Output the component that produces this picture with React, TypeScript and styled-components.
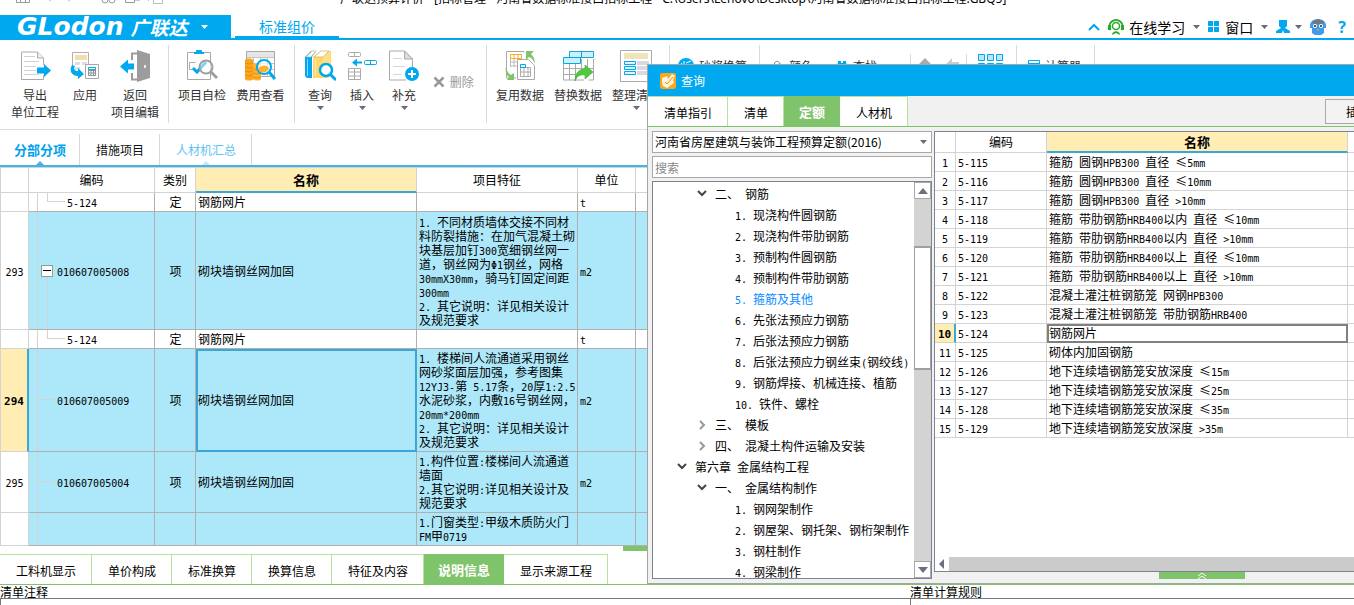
import React from "react";
import styled, { createGlobalStyle, css } from "styled-components";

const BLUE = "#00a8f0";
const GREEN = "#7fc36a";
const PALE_GREEN = "#b5e3a0";
const GRID = "#d3d3d3";
const ROW_LINE = "#b0b0b0";
const YELLOW = "#ffedb4";
const SELECT_BLUE = "#3ba7d6";
const ROW_BLUE = "#ade8fa";

const GlobalStyle = createGlobalStyle`
  * { box-sizing: border-box; }
  body {
    margin: 0;
    overflow: hidden;
    background: #fff;
    color: #000;
    font: 12px/14px "Noto Sans CJK SC", sans-serif;
  }
  button, input, select { font: inherit; color: inherit; }
  svg { display: block; flex: none; }
`;

/* ---------- text ---------- */

const Latin = styled.span<{ $bold?: boolean }>`
  font-family: "DejaVu Sans Mono", monospace;
  font-size: ${(p) => (p.$bold ? 11 : 10)}px;
  line-height: 0;
`;

const Line = styled.span`
  display: block;
  height: 14px;
  white-space: pre;
`;

function Mixed({ children, bold }: { children: string; bold?: boolean }) {
  return (
    <>
      {children.split(/([\x20-\x7eΦ]+)/).map((run, i) =>
        i % 2 ? <Latin key={i} $bold={bold}>{run}</Latin> : run
      )}
    </>
  );
}

/* ---------- frame ---------- */

const Page = styled.div`
  position: relative;
  display: flex;
  flex-direction: column;
  height: 100vh;
  overflow: hidden;
`;

const TitleBar = styled.header`
  display: flex;
  flex: none;
  align-items: flex-start;
  height: 15px;
  overflow: hidden;
  font-family: "Noto Sans", "Noto Sans CJK SC", sans-serif;
  white-space: pre;
`;

const QuickTools = styled.div`
  display: flex;
  gap: 12px;
  width: 340px;
  padding-left: 16px;
`;

const WindowTitle = styled.h1`
  margin: -8px 0 0;
  font-size: 12px;
  line-height: 14px;
  font-weight: 400;
`;

const MenuBar = styled.nav`
  display: flex;
  flex: none;
  align-items: stretch;
  height: 25px;
  border-bottom: 2px solid ${BLUE};
`;

const Brand = styled.button`
  display: flex;
  align-items: center;
  gap: 7px;
  width: 231px;
  padding: 0 0 0 17px;
  border: 0;
  background: ${BLUE};
  color: #fff;
  white-space: nowrap;
`;

const BrandLatin = styled.span`
  font: italic bold 25px/23px "DejaVu Sans", sans-serif;
`;

const BrandHan = styled.span`
  margin-right: 6px;
  font-size: 19px;
  line-height: 23px;
  font-style: italic;
  font-weight: 700;
`;

const MenuTab = styled.a`
  width: 104px;
  margin-left: 4px;
  border-bottom: 2px solid ${BLUE};
  color: ${BLUE};
  font-size: 14px;
  line-height: 22px;
  text-align: center;
  text-decoration: none;
`;

const MenuTools = styled.div`
  display: flex;
  align-items: center;
  gap: 8px;
  margin-left: auto;
  padding-right: 8px;
`;

const MenuButton = styled.button`
  display: flex;
  align-items: center;
  gap: 5px;
  padding: 0;
  border: 0;
  background: none;
  font-size: 14px;
  line-height: 20px;
  white-space: nowrap;
`;

const HelpButton = styled(MenuButton)`
  margin-left: 4px;
  color: ${BLUE};
  font: 700 16px/20px "Open Sans", sans-serif;
`;

/* ---------- ribbon ---------- */

const Ribbon = styled.div`
  display: flex;
  flex: none;
  height: 90px;
  padding: 5px 0 6px;
  border-bottom: 1px solid #dcdcdc;
`;

const RibbonGroup = styled.div<{ $left?: number; $right?: number; $short?: boolean }>`
  display: flex;
  align-items: flex-start;
  margin-top: ${(p) => (p.$short ? 9 : 0)}px;
  padding: ${(p) => (p.$short ? 0 : 5)}px ${(p) => p.$right ?? 4}px 0 ${(p) => p.$left ?? 4}px;
  border-right: 1px solid #dcdcdc;
`;

const RibbonButton = styled.button<{ $width: number }>`
  display: flex;
  flex-direction: column;
  align-items: center;
  width: ${(p) => p.$width}px;
  padding: 0;
  border: 0;
  background: none;
  color: #333;
  line-height: 17px;
  white-space: nowrap;
  > svg:first-child { margin-bottom: 4px; }
  > svg:last-child:not(:first-child) { margin-top: 3px; }
`;

const InlineButton = styled.button<{ $top?: number; $color?: string; $width?: number }>`
  display: flex;
  align-items: center;
  gap: 5px;
  width: ${(p) => (p.$width ? p.$width + "px" : "auto")};
  margin-top: ${(p) => p.$top ?? 8}px;
  padding: 0;
  border: 0;
  background: none;
  color: ${(p) => p.$color ?? "#333"};
  line-height: 16px;
  white-space: nowrap;
`;

/* ---------- tabs ---------- */

const SectionTabs = styled.div`
  display: flex;
  flex: none;
  height: 37px;
  padding-top: 4px;
  border-bottom: 2px solid #41b5e6;
`;

const SectionTab = styled.button<{ $tone?: "active" | "link" }>`
  position: relative;
  padding: 0 15px 0 16px;
  border: 0;
  border-right: 1px solid #d8d8d8;
  background: none;
  line-height: 31px;
  color: #111;
  ${(p) =>
    p.$tone === "active" &&
    css`
      padding: 0 13px 0 14px;
      color: #00a2ef;
      font-size: 13px;
      font-weight: 700;
    `}
  ${(p) => p.$tone === "link" && "color: #5cc4ef;"}
  &::after {
    content: ${(p) => (p.$tone ? '""' : "none")};
    position: absolute;
    left: 50%;
    bottom: 0;
    margin-left: -4px;
    border: 4px solid transparent;
    border-top: 0;
    border-bottom-color: ${(p) => (p.$tone === "active" ? "#41b5e6" : "#c4e9f6")};
  }
`;

const GreenTabs = styled.div`
  display: flex;
  flex: none;
  height: 31px;
  border-bottom: 1px solid ${GREEN};
`;

const GreenTab = styled.button<{ $active?: boolean }>`
  padding: 3px 15px 0 16px;
  border: 0;
  border-top: 1px solid ${PALE_GREEN};
  border-right: 1px solid ${PALE_GREEN};
  background: #fff;
  white-space: nowrap;
  ${(p) =>
    p.$active &&
    css`
      min-width: 56px;
      padding: 1px 13px 0 14px;
      border-color: ${GREEN};
      background: ${GREEN};
      color: #fff;
      font-size: 13px;
      font-weight: 700;
    `}
`;

/* ---------- tables ---------- */

const Sheet = styled.table`
  width: 100%;
  border-spacing: 0;
  table-layout: fixed;
`;

const Head = styled.th<{ $current?: boolean; $height: number }>`
  height: ${(p) => p.$height}px;
  padding: 0;
  border-right: 1px solid ${GRID};
  border-bottom: 1px solid ${GRID};
  font-weight: 400;
  ${(p) =>
    p.$current &&
    css`
      border-bottom: 2px solid ${SELECT_BLUE};
      background: ${YELLOW};
      font-size: 13px;
      font-weight: 700;
    `}
`;

const Cell = styled.td<{ $line?: string; $center?: boolean; $picked?: string }>`
  position: relative;
  padding: 0 1px 0 2px;
  border-right: 1px solid ${(p) => p.$line ?? GRID};
  border-bottom: 1px solid ${(p) => p.$line ?? GRID};
  overflow: hidden;
  white-space: pre;
  text-align: ${(p) => (p.$center ? "center" : "left")};
  ${(p) =>
    p.$picked &&
    css`
      outline: 2px solid ${p.$picked};
      outline-offset: -2px;
    `}
`;

const RowNumber = styled.th<{ $current?: boolean }>`
  padding: 0;
  border-right: 1px solid ${GRID};
  border-bottom: 1px solid ${GRID};
  background: #fff;
  font-weight: 400;
  text-align: center;
  ${(p) =>
    p.$current &&
    css`
      border-right: 2px solid ${SELECT_BLUE};
      background: ${YELLOW};
      font-weight: 700;
    `}
`;

const BillRow = styled.tr<{ $height: number; $filled?: boolean }>`
  height: ${(p) => p.$height}px;
  background: ${(p) => (p.$filled ? ROW_BLUE : "#fff")};
`;

const QuotaRow = styled.tr`
  height: 19px;
`;

const BillArea = styled.main`
  flex: none;
  border-top: 1px solid ${GRID};
  border-left: 1px solid ${GRID};
`;

const CodeCell = styled(Cell)<{ $indent: number }>`
  padding-left: ${(p) => p.$indent}px;
  &::before {
    content: "";
    position: absolute;
    top: 0;
    bottom: 0;
    left: 8px;
    border-left: 1px solid ${GRID};
  }
`;

const Branch = styled.span<{ $kind: "leaf" | "child" }>`
  position: absolute;
  top: 0;
  height: 50%;
  left: ${(p) => (p.$kind === "child" ? 18 : 9)}px;
  width: ${(p) => (p.$kind === "child" ? 18 : 17)}px;
  border-bottom: 1px solid ${GRID};
  border-left: ${(p) => (p.$kind === "child" ? 1 : 0)}px solid ${GRID};
`;

const Stem = styled.span`
  position: absolute;
  top: 50%;
  bottom: 0;
  left: 18px;
  border-left: 1px solid ${GRID};
`;

const Fold = styled.button`
  position: absolute;
  top: 50%;
  left: 12px;
  display: flex;
  align-items: center;
  justify-content: center;
  width: 12px;
  height: 12px;
  margin-top: -6px;
  padding: 0;
  border: 1px solid #999;
  background: #fff;
`;

/* ---------- lower part ---------- */

const Splitter = styled.div`
  flex: none;
  height: 8px;
  padding-left: 46%;
`;

const Handle = styled.button<{ $height: number }>`
  display: flex;
  align-items: flex-end;
  justify-content: center;
  width: 86px;
  height: ${(p) => p.$height}px;
  padding: 0;
  border: 0;
  background: ${GREEN};
`;

const Notes = styled.div`
  display: grid;
  flex: 1;
  grid-template-columns: 910fr 444fr;
`;

const NotePane = styled.section`
  display: flex;
  flex-direction: column;
  line-height: 13px;
`;

const NoteBox = styled.div`
  flex: 1;
  border-top: 1px solid #777;
  border-left: 1px solid #777;
`;

/* ---------- query window ---------- */

const Dialog = styled.section`
  position: absolute;
  top: 64px;
  left: 647px;
  right: -116px;
  display: flex;
  flex-direction: column;
  border: 1px solid #a5a5a5;
  background: #f1f1f1;
`;

const DialogTitle = styled.h2`
  display: flex;
  align-items: center;
  gap: 5px;
  height: 31px;
  margin: 0;
  padding-left: 12px;
  background: ${BLUE};
  color: #fff;
  font-size: 12px;
  font-weight: 400;
`;

const DialogAction = styled.button`
  width: 66px;
  height: 25px;
  margin: 3px 78px 0 auto;
  border: 1px solid #a8a8a8;
  background: #f3f3f3;
`;

const DialogBody = styled.div`
  display: flex;
  gap: 2px;
  padding: 4px 0 4px 4px;
`;

const Finder = styled.div`
  display: flex;
  flex: none;
  flex-direction: column;
  gap: 3px;
  width: 280px;
`;

const SelectWrap = styled.label`
  position: relative;
  display: flex;
  > svg {
    position: absolute;
    top: 9px;
    right: 5px;
    pointer-events: none;
  }
`;

const LibrarySelect = styled.select`
  appearance: none;
  width: 100%;
  height: 22px;
  padding: 0 0 0 2px;
  border: 1px solid #a8a8a8;
  border-radius: 0;
  background: #fff;
`;

const SearchBox = styled.input`
  width: 100%;
  height: 22px;
  padding: 0 2px;
  border: 1px solid #a8a8a8;
  background: #fff;
  &::placeholder { color: #888; }
`;

const TreeBox = styled.div`
  display: flex;
  height: 398px;
  border: 1px solid #7f838f;
  background: #fff;
`;

const Tree = styled.ul`
  flex: 1;
  margin: 0;
  padding: 1px 0 0;
  overflow: hidden;
  list-style: none;
`;

const TreeItem = styled.li<{ $indent: number; $active?: boolean }>`
  display: flex;
  align-items: center;
  gap: 8px;
  height: 21px;
  padding-left: ${(p) => p.$indent}px;
  color: ${(p) => (p.$active ? "#0a8cff" : "#000")};
  white-space: pre;
`;

const ScrollColumn = styled.div`
  display: flex;
  flex-direction: column;
  width: 17px;
  background: #d3d3d3;
`;

const ScrollButton = styled.button<{ $flat?: boolean }>`
  display: flex;
  flex: none;
  align-items: center;
  justify-content: center;
  width: ${(p) => (p.$flat ? 14 : 17)}px;
  height: ${(p) => (p.$flat ? 14 : 17)}px;
  padding: 0;
  border: ${(p) => (p.$flat ? 0 : 1)}px solid #a8a8a8;
  background: #fff;
`;

const ScrollThumb = styled.div`
  height: 124px;
  margin: 47px 0 auto;
  border: 1px solid #a0a0a0;
  border-width: 2px 1px;
  background: #fff;
`;

const Results = styled.div`
  display: flex;
  flex: 1;
  flex-direction: column;
  align-items: center;
`;

const ResultPanel = styled.div`
  display: flex;
  flex: 1;
  flex-direction: column;
  width: 100%;
  border: 1px solid #7f838f;
  background: #fff;
`;

const ScrollRow = styled.div`
  display: flex;
  margin-top: auto;
  background: #cbcbcb;
`;

/* ---------- icons ---------- */

const Caret = ({ color = "#6b6b78" }: { color?: string }) => (
  <svg width="7" height="4" viewBox="0 0 7 4"><path d="M0 0h7L3.5 4z" fill={color} /></svg>
);

const Arrow = ({ d }: { d: string }) => (
  <svg width="10" height="10" viewBox="0 0 10 10"><path d={d} fill="#6b6f80" /></svg>
);

const Chevron = ({ open }: { open?: boolean }) => (
  <svg width="10" height="10" viewBox="0 0 10 10" fill="none" stroke={open ? "#444" : "#999"} strokeWidth="2">
    <path d={open ? "M1 2l4 4 4-4" : "M3 1l4 4-4 4"} />
  </svg>
);

const Icon = ({ children, size = 32 }: { children: React.ReactNode; size?: number }) => (
  <svg width={size} height={size} viewBox={`0 0 ${size} ${size}`} fill="none">{children}</svg>
);

const ExportIcon = () => (
  <Icon>
    <path d="M24.500 15V8l-6-6H2.500v27.500h22V25" stroke="#aaa" />
    <path d="M18.500 2v6h6" stroke="#aaa" fill="#eee" />
    <path d="M5 6.500h11M5 11.500h15M5 16.500h12M5 20.500h12M5 24.500h15" stroke="#d0d0d8" />
    <path d="M18 17.500h7V14l7 6.500-7 6.500v-3.500h-7z" fill={BLUE} />
  </Icon>
);

const ApplyIcon = () => (
  <Icon>
    <path d="M3.500 20V2.500h16V14" stroke="#b0b0b0" />
    <path d="M6 5h12v5H6z" fill="#f1ddb0" />
    <path d="M6 12h5v3H6zM13 12h5v3h-5zM6 17h5v3H6z" fill="#dedee4" />
    <path d="M16.500 14.500h13v14h-13z" fill="#fff" stroke="#a8a8a8" />
    <path d="M19.500 17.500h7v3h-7zM19.500 20.500h7v5h-7zM22 20v6M24.500 20v6M19 23h8" stroke="#89919a" />
    <path d="M19.500 17.500h7v2h-7z" stroke="#17b0d0" />
    <path d="M3 15c-3 5-1 11 6 11v3l6-5-6-6v3c-3 0-5-2-3-5z" fill={BLUE} />
  </Icon>
);

const ReturnIcon = () => (
  <Icon>
    <path d="M18 3.500h-5V10M13 23v6.500h5" stroke="#9c9c9c" strokeWidth="2" />
    <path d="M18 0l13 4v24l-13 4z" fill="#9c9c9c" />
    <path d="M25 15h2v3h-2z" fill="#eee" />
    <path d="M1 16.500l8-7v4h6v6H9v4z" fill={BLUE} />
  </Icon>
);

const CheckIcon = () => (
  <Icon>
    <path d="M1.500 2.500h23v27h-23z" stroke="#a8a8a8" />
    <path d="M8 2h2a3 3 0 016 0h2v2H8z" fill={BLUE} />
    <path d="M9.500 12.500h-6v7H10" stroke="#aaa" />
    <path d="M7 18l4 4 9-10" stroke={BLUE} strokeWidth="3" />
    <circle cx="20" cy="17" r="6.500" stroke="#9d9d9d" strokeWidth="2" fill="#fff" fillOpacity=".5" />
    <path d="M25 22l6 6" stroke="#9d9d9d" strokeWidth="3" />
  </Icon>
);

const FeeIcon = () => (
  <Icon>
    <path d="M1.500 1.500h28v25h-28z" stroke="#a8a8a8" />
    <path d="M2 2h27v5H2z" fill="#e6e6e6" />
    <path d="M2 7.500h27M2 13.500h27M2 19.500h27M8.500 8v18M15.500 8v18M22.500 8v18" stroke="#c4c4c4" />
    <path d="M0 10c0-2 8-2 8 0v19c0 2-8 2-8 0z" fill="#fca51c" />
    <path d="M8 15c0-2 8-2 8 0v14c0 2-8 2-8 0z" fill="#fcb12f" />
    <path d="M0 13q4 2 8 0M0 17q4 2 8 0M0 21q4 2 8 0M0 25q4 2 8 0M8 19q4 2 8 0M8 23q4 2 8 0M8 27q4 2 8 0" stroke="#d98208" strokeWidth=".7" />
    <circle cx="19" cy="17" r="7" fill="#fff" fillOpacity=".7" stroke={BLUE} strokeWidth="2" />
    <path d="M13 19c3-4 8-5 11-1-2 6-9 6-11 1z" fill="#fcb12f" />
    <path d="M24 22l6 7" stroke={BLUE} strokeWidth="3" />
  </Icon>
);

const QueryIcon = () => (
  <Icon>
    <path d="M1 7l6-6h5L8 7v21H3l-2-2z" fill={BLUE} />
    <path d="M2 7l6-6h4L7 7z" fill="#fff" stroke="#c9b27a" strokeWidth=".7" />
    <path d="M9 7l8-6h10v25l-4 2H9z" fill="#ffd76a" />
    <path d="M10 7l7-6h8l-6 6z" fill="#fff" stroke="#c9a95a" strokeWidth=".7" />
    <path d="M19 7l7-6v24l-7 3z" fill="#ffdf86" />
    <path d="M3.500 9v17M11.500 9v17" stroke="#fff" strokeOpacity=".5" />
    <circle cx="22" cy="20" r="6" fill="#fff" stroke={BLUE} strokeWidth="2.500" />
    <path d="M26 24l6 6" stroke={BLUE} strokeWidth="3" />
  </Icon>
);

const InsertIcon = () => (
  <Icon>
    <rect x="2.500" y="2.500" width="12" height="4" rx="1" stroke="#aaa" />
    <path d="M8.500 3v4" stroke="#aaa" />
    <rect x="18.500" y="10.500" width="12" height="4" rx="1" stroke={BLUE} />
    <path d="M24.500 11v4" stroke={BLUE} />
    <path d="M6 12.500l5-4v3h5v2h-5v3z" fill={BLUE} />
    <path d="M2.500 18.500h12v11h-12zM2.500 22h12M2.500 26h12M8.500 18v12" stroke="#aaa" />
  </Icon>
);

const SupplementIcon = () => (
  <Icon>
    <path d="M24.500 18V9l-8-8H1.500v29H18" stroke="#aaa" />
    <path d="M16.500 1v8h8z" stroke="#aaa" fill="#ddd" />
    <path d="M5 8.500h9M5 16.500h12M5 24.500h9" stroke="#d5d5dc" />
    <circle cx="24" cy="24" r="7" fill={BLUE} />
    <path d="M20 24h8M24 20v8" stroke="#fff" strokeWidth="2" />
  </Icon>
);

const DeleteIcon = () => (
  <Icon size={12}><path d="M1.500 1.500l9 9M10.500 1.500l-9 9" stroke="#999" strokeWidth="2.500" /></Icon>
);

const ReuseIcon = () => (
  <Icon>
    <path d="M20 2.500V1.500H2.500V28H12" stroke="#aaa" />
    <path d="M6.500 4.500h11v4h-11zM10 4v5M14 4v5" stroke="#f7ad22" />
    <path d="M6 12h10M6 16h7M6.500 9v8M10 9v8" stroke="#bbb" />
    <path d="M13.500 9.500h11l6 6v14h-17z" fill="#fff" stroke="#aaa" />
    <path d="M16.500 17.500h10v9h-10zM16 22h11M20 17v10M24 17v10" stroke="#aaa" />
    <path d="M16.500 14.500h5v3h-5z" stroke={BLUE} />
    <path d="M22 1h8l-3 3c3 3 4 6 4 10-1-3-3-6-6-7l-3 3z" fill={GREEN} />
    <path d="M2 17c1 4 2 6 5 8l3-2v7H3l2-3c-3-2-4-6-3-10z" fill={GREEN} />
  </Icon>
);

const ReplaceIcon = () => (
  <Icon>
    <path d="M1.500 13.500V30H22M1 18.500h30M1 24.500h16M7.500 14v16M13.500 14v16M19.500 9v12M25.500 9v10M31.500 9v21h-5" stroke="#aaa" />
    <path d="M7.500 1.500h24v6h-24zM19.500 2v6" fill="#c8f1fb" stroke="#24a4c9" />
    <path d="M1.500 7.500h17v6h-17z" fill="#c8f1fb" stroke={BLUE} />
    <path d="M13 31c0-8 4-12 10-12v-4l8 7-8 7v-4c-5-1-8 1-10 6z" fill="#50c93d" stroke="#3aa62d" strokeWidth=".6" />
  </Icon>
);

const ArrangeIcon = () => (
  <Icon>
    <path d="M.500.500h31v31H.500z" stroke="#aaa" />
    <path d="M4 3h24v6H4z" fill="#f1e3b8" />
    <path d="M17 11h12v4H17zM17 16h12v4H17zM17 21h12v4H17z" fill="#d9d9e2" />
    <path d="M4.500 11.500h11v3h-11zM4.500 16.500h11v3h-11zM4.500 21.500h11v3h-11z" stroke={BLUE} fill="#dff4fc" />
  </Icon>
);

/* ---------- data ---------- */

type Bill = {
  no?: string;
  code?: string;
  kind?: string;
  name?: string;
  features?: string[];
  unit?: string;
  height: number;
  node: "child" | "parent" | "leaf" | "none";
  current?: boolean;
};

const bills: Bill[] = [
  { code: "5-124", kind: "定", name: "钢筋网片", unit: "t", height: 19, node: "child" },
  {
    no: "293", code: "010607005008", kind: "项", name: "砌块墙钢丝网加固", unit: "m2", height: 118, node: "parent",
    features: ["1. 不同材质墙体交接不同材", "料防裂措施：在加气混凝土砌", "块基层加钉300宽细钢丝网一", "道，钢丝网为Φ1钢丝，网格", "30mmX30mm，骑马钉固定间距", "300mm", "2. 其它说明：详见相关设计", "及规范要求"],
  },
  { code: "5-124", kind: "定", name: "钢筋网片", unit: "t", height: 19, node: "child" },
  {
    no: "294", code: "010607005009", kind: "项", name: "砌块墙钢丝网加固", unit: "m2", height: 103, node: "leaf", current: true,
    features: ["1. 楼梯间人流通道采用钢丝", "网砂浆面层加强，参考图集", "12YJ3-第 5.17条，20厚1:2.5", "水泥砂浆，内敷16号钢丝网，", "20mm*200mm", "2. 其它说明：详见相关设计", "及规范要求"],
  },
  {
    no: "295", code: "010607005004", kind: "项", name: "砌块墙钢丝网加固", unit: "m2", height: 61, node: "leaf",
    features: ["1.构件位置:楼梯间人流通道", "墙面", "2.其它说明:详见相关设计及", "规范要求"],
  },
  { height: 33, node: "none", features: ["1.门窗类型:甲级木质防火门", "FM甲0719"] },
];

const tree: { text: string; level: 0 | 1 | 2; open?: boolean; active?: boolean }[] = [
  { text: "二、 钢筋", level: 1, open: true },
  { text: "1. 现浇构件圆钢筋", level: 2 },
  { text: "2. 现浇构件带肋钢筋", level: 2 },
  { text: "3. 预制构件圆钢筋", level: 2 },
  { text: "4. 预制构件带肋钢筋", level: 2 },
  { text: "5. 箍筋及其他", level: 2, active: true },
  { text: "6. 先张法预应力钢筋", level: 2 },
  { text: "7. 后张法预应力钢筋", level: 2 },
  { text: "8. 后张法预应力钢丝束(钢绞线)", level: 2 },
  { text: "9. 钢筋焊接、机械连接、植筋", level: 2 },
  { text: "10. 铁件、螺栓", level: 2 },
  { text: "三、 模板", level: 1 },
  { text: "四、 混凝土构件运输及安装", level: 1 },
  { text: "第六章 金属结构工程", level: 0, open: true },
  { text: "一、 金属结构制作", level: 1, open: true },
  { text: "1. 钢网架制作", level: 2 },
  { text: "2. 钢屋架、钢托架、钢桁架制作", level: 2 },
  { text: "3. 钢柱制作", level: 2 },
  { text: "4. 钢梁制作", level: 2 },
];

const treeIndent = { 0: 24, 1: 44, 2: 82 };

const quotas = [
  "箍筋 圆钢HPB300 直径 ≤5mm",
  "箍筋 圆钢HPB300 直径 ≤10mm",
  "箍筋 圆钢HPB300 直径 >10mm",
  "箍筋 带肋钢筋HRB400以内 直径 ≤10mm",
  "箍筋 带肋钢筋HRB400以内 直径 >10mm",
  "箍筋 带肋钢筋HRB400以上 直径 ≤10mm",
  "箍筋 带肋钢筋HRB400以上 直径 >10mm",
  "混凝土灌注桩钢筋笼 网钢HPB300",
  "混凝土灌注桩钢筋笼 带肋钢筋HRB400",
  "钢筋网片",
  "砌体内加固钢筋",
  "地下连续墙钢筋笼安放深度 ≤15m",
  "地下连续墙钢筋笼安放深度 ≤25m",
  "地下连续墙钢筋笼安放深度 ≤35m",
  "地下连续墙钢筋笼安放深度 >35m",
];

/* ---------- parts ---------- */

function TopBars() {
  return (
    <>
      <TitleBar>
        <QuickTools>
          <svg width="150" height="5" viewBox="0 0 150 5" fill="none" stroke="#999">
            <path d="M.500 0v2.500h13V0M4.500 0v2M9.500 0v2" />
            <path d="M33 0l2 1M54 0l-2 1" stroke="#8fd4f4" />
            <circle cx="89" cy="0" r="3" /><circle cx="96" cy="0" r="3" />
            <path d="M109.500 0v2.500h9V0M119 0h5" />
            <path d="M132.500 0v1M137.500 0v3.500h9V0" stroke="#bbb" />
          </svg>
        </QuickTools>
        <WindowTitle>{"广联达预算计价 - [招标管理 - 河南省数据标准接口招标工程 - C:\\Users\\Lenovo\\Desktop\\河南省数据标准接口招标工程.GBQ5]"}</WindowTitle>
      </TitleBar>
      <MenuBar>
        <Brand>
          <BrandLatin>GLodon</BrandLatin>
          <BrandHan>广联达</BrandHan>
          <Caret color="#fff" />
        </Brand>
        <MenuTab href="#pricing">标准组价</MenuTab>
        <MenuTools>
          <MenuButton aria-label="收起">
            <svg width="12" height="8" viewBox="0 0 12 8" fill="none"><path d="M1 7l5-5 5 5" stroke={BLUE} strokeWidth="2" /></svg>
          </MenuButton>
          <MenuButton>
            <Icon size={16}>
              <path d="M2.500 11A6.500 6.500 0 1113.500 11" stroke="#2bab2b" strokeWidth="2" />
              <circle cx="8" cy="7" r="3.500" stroke="#2bab2b" strokeWidth="1.500" />
              <path d="M0 6h3v5H0zM13 6h3v5h-3zM4 16c0-5 8-5 8 0l-4-2z" fill="#2bab2b" />
            </Icon>
            在线学习
          </MenuButton>
          <Caret />
          <MenuButton>
            <Icon size={12}><path d="M0 0h5v5H0zM6 0h5v5H6zM0 6h5v5H0zM6 6h5v5H6z" fill={BLUE} /></Icon>
            窗口
          </MenuButton>
          <Caret />
          <MenuButton aria-label="账户">
            <Icon size={14}><path d="M3 0h8v6l-2 2 5 3v2H8l-1-3-1 3H0v-2l5-3-2-2z" fill={BLUE} /></Icon>
            <Caret />
          </MenuButton>
          <MenuButton aria-label="助手">
            <Icon size={16}>
              <path d="M0 6C1-2 15-2 16 6v3h-2v5l-3 2H5l-3-2V9H0z" fill="#3d9be9" />
              <path d="M2 3q6-5 12 0l-2 2H4z" fill="#777" />
              <circle cx="5" cy="7" r="2" fill="#fff" /><circle cx="11" cy="7" r="2" fill="#fff" />
              <circle cx="5" cy="7" r="1" fill="#222" /><circle cx="11" cy="7" r="1" fill="#222" />
              <path d="M7 10h2l-1 2z" fill="#f6b23c" />
            </Icon>
          </MenuButton>
          <HelpButton aria-label="帮助">?</HelpButton>
        </MenuTools>
      </MenuBar>
    </>
  );
}

function RibbonBar() {
  return (
    <Ribbon>
      <RibbonGroup $left={10} $right={8}>
        <RibbonButton $width={50}><ExportIcon />导出<span>单位工程</span></RibbonButton>
        <RibbonButton $width={50}><ApplyIcon />应用</RibbonButton>
        <RibbonButton $width={50}><ReturnIcon />返回<span>项目编辑</span></RibbonButton>
      </RibbonGroup>
      <RibbonGroup>
        <RibbonButton $width={58}><CheckIcon />项目自检</RibbonButton>
        <RibbonButton $width={59}><FeeIcon />费用查看</RibbonButton>
      </RibbonGroup>
      <RibbonGroup $right={7}>
        <RibbonButton $width={42}><QueryIcon />查询<Caret /></RibbonButton>
        <RibbonButton $width={42}><InsertIcon />插入<Caret /></RibbonButton>
        <RibbonButton $width={42}><SupplementIcon />补充<Caret /></RibbonButton>
        <InlineButton $top={24} $color="#999" $width={54}>&nbsp;<DeleteIcon />删除</InlineButton>
      </RibbonGroup>
      <RibbonGroup>
        <RibbonButton $width={58}><ReuseIcon />复用数据</RibbonButton>
        <RibbonButton $width={58}><ReplaceIcon />替换数据</RibbonButton>
        <RibbonButton $width={58}><ArrangeIcon />整理清单<Caret /></RibbonButton>
      </RibbonGroup>
      <RibbonGroup $left={8} $right={12}>
        <InlineButton>
          <Icon size={16}><circle cx="8" cy="8" r="8" fill={BLUE} /><path d="M3 5l2 2M6 3v5M8 5l5-2M9 7h4" stroke="#fff" /></Icon>
          砂浆换算
        </InlineButton>
      </RibbonGroup>
      <RibbonGroup $short $left={10} $right={33}>
        <InlineButton $top={4} $width={66}>
          <Icon size={14}><path d="M2 12l3-9 3-1 4 6-4 5z" fill="#fff" stroke="#999" /><path d="M9 3l4 4v4z" fill="#ee8a2d" /></Icon>
          颜色
        </InlineButton>
        <InlineButton $top={4}>
          <Icon size={12}><path d="M0 6l2-3V1h3v2h2V1h3v2l2 3v6H0z" fill={BLUE} /></Icon>
          查找
        </InlineButton>
      </RibbonGroup>
      <RibbonGroup $short $left={7} $right={7}>
        <InlineButton $top={4} $width={27} aria-label="上移"><Icon size={14}><path d="M7 0l7 7h-4v7H4V7H0z" fill="#aaa" /></Icon></InlineButton>
        <InlineButton $top={4} aria-label="左移"><Icon size={14}><path d="M0 7l7-7v4h7v6H7v4z" fill="#ccc" /></Icon></InlineButton>
      </RibbonGroup>
      <RibbonGroup $left={11} $right={11}>
        <InlineButton $top={4} aria-label="视图">
          <svg width="27" height="16" viewBox="0 0 27 16" fill="#bfe6f8" stroke={BLUE}>
            <path d="M.500.500h6v6h-6zM9.500.500h6v6h-6zM18.500.500h6v6h-6zM.500 9.500h6v6h-6zM9.500 9.500h6v6h-6zM18.500 9.500h6v6h-6z" />
          </svg>
        </InlineButton>
      </RibbonGroup>
      <RibbonGroup $left={11} $right={13}>
        <InlineButton>
          <Icon size={12}><path d="M.500.500h11v11H.500zM0 3.500h12" stroke={BLUE} /></Icon>
          计算器
        </InlineButton>
      </RibbonGroup>
    </Ribbon>
  );
}

function BillTable() {
  return (
    <BillArea>
      <Sheet>
        <colgroup>
          <col width="28" /><col width="126" /><col width="41" /><col width="221" />
          <col width="161" /><col width="58" /><col />
        </colgroup>
        <thead>
          <tr>
            <Head $height={25} />
            <Head $height={25}>编码</Head>
            <Head $height={25}>类别</Head>
            <Head $height={25} $current>名称</Head>
            <Head $height={25}>项目特征</Head>
            <Head $height={25}>单位</Head>
            <Head $height={25} />
          </tr>
        </thead>
        <tbody>
          {bills.map((b, i) => (
            <BillRow key={i} $height={b.height} $filled={b.node !== "child"}>
              <RowNumber $current={b.current}><Mixed bold={b.current}>{b.no ?? ""}</Mixed></RowNumber>
              <CodeCell $line={ROW_LINE} $indent={b.node === "child" ? 38 : 28}>
                {(b.node === "child" || b.node === "leaf") && <Branch $kind={b.node} />}
                {b.node === "parent" && (
                  <>
                    <Stem />
                    <Fold aria-label="折叠">
                      <svg width="8" height="2" viewBox="0 0 8 2"><path d="M0 0h8v1H0z" fill="#000" /></svg>
                    </Fold>
                  </>
                )}
                <Mixed>{b.code ?? ""}</Mixed>
              </CodeCell>
              <Cell $line={ROW_LINE} $center>{b.kind}</Cell>
              <Cell $line={ROW_LINE} $picked={b.current ? SELECT_BLUE : undefined}>{b.name}</Cell>
              <Cell $line={ROW_LINE}>
                {b.features?.map((f, n) => <Line key={n}><Mixed>{f}</Mixed></Line>)}
              </Cell>
              <Cell $line={ROW_LINE}><Mixed>{b.unit ?? ""}</Mixed></Cell>
              <Cell $line={ROW_LINE} />
            </BillRow>
          ))}
        </tbody>
      </Sheet>
    </BillArea>
  );
}

function QueryDialog() {
  return (
    <Dialog role="dialog" aria-label="查询">
      <DialogTitle>
        <Icon size={16}>
          <rect width="16" height="16" rx="2" fill="#ffa51e" />
          <path d="M2 5l5-2 1 3 4-5 3 2-2 4 1 3-7 5-4-2-1-3z" fill="#fff3d8" />
          <path d="M5 9l2 2 6-7" stroke="#ee9410" />
        </Icon>
        查询
      </DialogTitle>
      <GreenTabs>
        <GreenTab>清单指引</GreenTab>
        <GreenTab>清单</GreenTab>
        <GreenTab $active>定额</GreenTab>
        <GreenTab>人材机</GreenTab>
        <DialogAction>插入</DialogAction>
      </GreenTabs>
      <DialogBody>
        <Finder>
          <SelectWrap>
            <LibrarySelect aria-label="定额库">
              <option>河南省房屋建筑与装饰工程预算定额(2016)</option>
            </LibrarySelect>
            <Caret />
          </SelectWrap>
          <SearchBox aria-label="搜索" placeholder="搜索" />
          <TreeBox>
            <Tree>
              {tree.map((t) => (
                <TreeItem key={t.text} $indent={treeIndent[t.level]} $active={t.active}>
                  {t.level < 2 && <Chevron open={t.open} />}
                  <span><Mixed>{t.text}</Mixed></span>
                </TreeItem>
              ))}
            </Tree>
            <ScrollColumn>
              <ScrollButton aria-label="向上滚动"><Arrow d="M0 8l5-6 5 6z" /></ScrollButton>
              <ScrollThumb />
              <ScrollButton aria-label="向下滚动"><Arrow d="M0 2h10L5 8z" /></ScrollButton>
            </ScrollColumn>
          </TreeBox>
        </Finder>
        <Results>
          <ResultPanel>
            <Sheet>
              <colgroup><col width="21" /><col width="91" /><col width="301" /><col /></colgroup>
              <thead>
                <tr>
                  <Head $height={21} />
                  <Head $height={21}>编码</Head>
                  <Head $height={21} $current>名称</Head>
                  <Head $height={21} />
                </tr>
              </thead>
              <tbody>
                {quotas.map((q, i) => (
                  <QuotaRow key={q}>
                    <RowNumber $current={i === 9}><Mixed bold={i === 9}>{String(i + 1)}</Mixed></RowNumber>
                    <Cell><Mixed>{`5-${115 + i}`}</Mixed></Cell>
                    <Cell $picked={i === 9 ? "#808080" : undefined}><Mixed>{q}</Mixed></Cell>
                    <Cell />
                  </QuotaRow>
                ))}
              </tbody>
            </Sheet>
            <ScrollRow>
              <ScrollButton $flat aria-label="向左滚动"><Arrow d="M7 0v10L2 5z" /></ScrollButton>
            </ScrollRow>
          </ResultPanel>
          <Handle $height={7} aria-label="展开">
            <svg width="12" height="7" viewBox="0 0 12 7" fill="none" stroke="#fff"><path d="M2 4l4-3 4 3M2 7l4-3 4 3" /></svg>
          </Handle>
        </Results>
      </DialogBody>
    </Dialog>
  );
}

export default function App() {
  return (
    <Page>
      <GlobalStyle />
      <TopBars />
      <RibbonBar />
      <SectionTabs>
        <SectionTab $tone="active">分部分项</SectionTab>
        <SectionTab>措施项目</SectionTab>
        <SectionTab $tone="link">人材机汇总</SectionTab>
      </SectionTabs>
      <BillTable />
      <Splitter><Handle $height={5} aria-label="收起" /></Splitter>
      <GreenTabs>
        <GreenTab>工料机显示</GreenTab>
        <GreenTab>单价构成</GreenTab>
        <GreenTab>标准换算</GreenTab>
        <GreenTab>换算信息</GreenTab>
        <GreenTab>特征及内容</GreenTab>
        <GreenTab $active>说明信息</GreenTab>
        <GreenTab>显示来源工程</GreenTab>
      </GreenTabs>
      <Notes>
        <NotePane>清单注释<NoteBox /></NotePane>
        <NotePane>清单计算规则<NoteBox /></NotePane>
      </Notes>
      <QueryDialog />
    </Page>
  );
}
